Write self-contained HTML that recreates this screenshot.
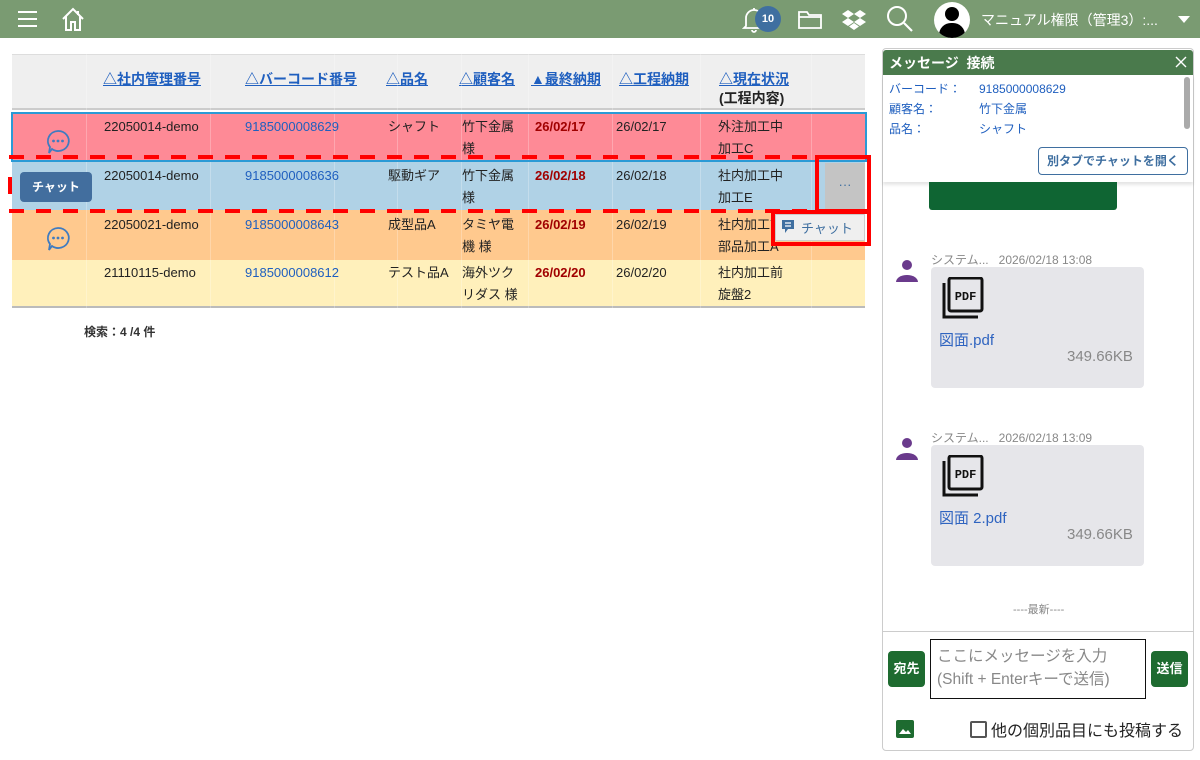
<!DOCTYPE html>
<html><head><meta charset="utf-8">
<style>
*{box-sizing:border-box;margin:0;padding:0}
body{width:1200px;height:760px;overflow:hidden;background:#fff;font-family:"Liberation Sans","Noto Sans CJK JP",sans-serif;font-size:13px;color:#222;position:relative}
.a{position:absolute}
.hdr{left:0;top:0;width:1200px;height:38px;background:#7a9b72}
.th{font-weight:bold;color:#1f5fbf;text-decoration:underline;font-size:14px}
.row{position:absolute;left:12px;width:853px}
.cell{position:absolute;line-height:22px;font-size:13px}
.vl{position:absolute;top:54px;width:1px;height:254px;background:rgba(255,255,255,.25)}
.bc{color:#1f5fbf}
.dd{color:#a00000;font-weight:bold}
.dash{position:absolute;height:4px;background:repeating-linear-gradient(90deg,#f00 0 15px,transparent 15px 27px)}
</style></head><body>
<div class="a hdr"></div>
<div class="a" style="left:18px;top:11px;width:19px;height:2px;background:#fff"></div>
<div class="a" style="left:18px;top:18px;width:19px;height:2px;background:#fff"></div>
<div class="a" style="left:18px;top:25px;width:19px;height:2px;background:#fff"></div>
<svg class="a" style="left:60px;top:6px" width="26" height="26" viewBox="0 0 26 26"><path d="M3 13 L13 3 L23 13 M6 10 V24 H11 V16 H15 V24 H20 V10 M18 5 V9" fill="none" stroke="#fff" stroke-width="2"/></svg>
<svg class="a" style="left:742px;top:6px" width="24" height="28" viewBox="0 0 24 28"><path d="M4 20 V12 a8 8 0 0 1 16 0 V20 L22 22 H2 Z M10 24 a2 2 0 0 0 4 0 M12 2 V4" fill="none" stroke="#fff" stroke-width="1.8"/></svg>
<div class="a" style="left:755px;top:6px;width:26px;height:26px;border-radius:13px;background:#3f6fa0;color:#fff;font-size:11px;font-weight:bold;text-align:center;line-height:26px">10</div>
<svg class="a" style="left:797px;top:8px" width="26" height="22" viewBox="0 0 26 22"><path d="M2 4 H10 L12 7 H24 V20 H2 Z M2 9 H24" fill="none" stroke="#fff" stroke-width="1.8"/></svg>
<svg class="a" style="left:842px;top:7px" width="24" height="24" viewBox="0 0 24 24"><g fill="#fff"><path d="M6 3 L12 7 L6 11 L0 7Z M18 3 L24 7 L18 11 L12 7Z M6 11 L12 15 L6 19 L0 15Z M18 11 L24 15 L18 19 L12 15Z M12 16 L17 19.5 L12 23 L7 19.5Z"/></g></svg>
<svg class="a" style="left:886px;top:5px" width="28" height="28" viewBox="0 0 28 28"><circle cx="11" cy="11" r="9" fill="none" stroke="#fff" stroke-width="2"/><path d="M18 18 L26 26" stroke="#fff" stroke-width="2.2"/></svg>
<div class="a" style="left:934px;top:2px;width:36px;height:36px;border-radius:18px;background:#fff;overflow:hidden"><div class="a" style="left:11px;top:5px;width:14px;height:14px;border-radius:7px;background:#000"></div><div class="a" style="left:5px;top:21px;width:26px;height:20px;border-radius:12px 12px 0 0;background:#000"></div></div>
<div class="a" style="left:981px;top:10px;color:#fff;font-size:14px">マニュアル権限（管理3）:...</div>
<div class="a" style="left:1178px;top:16px;border-left:6px solid transparent;border-right:6px solid transparent;border-top:7px solid #fff"></div>

<div class="a" style="left:12px;top:54px;width:853px;height:56px;background:#efefef;border-top:1px solid #ddd;border-bottom:2px solid #ccc"></div>
<div class="a th" style="left:103px;top:69px">△社内管理番号</div>
<div class="a th" style="left:245px;top:69px">△バーコード番号</div>
<div class="a th" style="left:386px;top:69px">△品名</div>
<div class="a th" style="left:459px;top:69px">△顧客名</div>
<div class="a th" style="left:531px;top:69px">▲最終納期</div>
<div class="a th" style="left:619px;top:69px">△工程納期</div>
<div class="a th" style="left:719px;top:69px">△現在状況</div>
<div class="a" style="left:719px;top:88px;font-weight:bold;font-size:14px">(工程内容)</div>

<div class="row" style="top:112px;height:48px;background:#fe8a96"></div>
<div class="row" style="top:160px;height:50px;background:#b0d2e6"></div>
<div class="row" style="top:210px;height:50px;background:#ffc98e"></div>
<div class="row" style="top:260px;height:48px;background:#fff0bb;border-bottom:2px solid #bbb"></div>
<div class="vl" style="left:86px"></div><div class="vl" style="left:210px"></div><div class="vl" style="left:334px"></div><div class="vl" style="left:397px"></div><div class="vl" style="left:461px"></div><div class="vl" style="left:528px"></div><div class="vl" style="left:612px"></div><div class="vl" style="left:700px"></div><div class="vl" style="left:811px"></div>
<div class="a" style="left:11px;top:112px;width:856px;height:50px;border:2px solid #2a9ad6"></div>

<div class="cell" style="left:104px;top:116px">22050014-demo</div><div class="cell bc" style="left:245px;top:116px">9185000008629</div><div class="cell" style="left:388px;top:116px">シャフト</div><div class="cell" style="left:462px;top:116px">竹下金属<br>様</div><div class="cell dd" style="left:535px;top:116px">26/02/17</div><div class="cell" style="left:616px;top:116px">26/02/17</div><div class="cell" style="left:718px;top:116px">外注加工中<br>加工C</div>
<div class="cell" style="left:104px;top:165px">22050014-demo</div><div class="cell bc" style="left:245px;top:165px">9185000008636</div><div class="cell" style="left:388px;top:165px">駆動ギア</div><div class="cell" style="left:462px;top:165px">竹下金属<br>様</div><div class="cell dd" style="left:535px;top:165px">26/02/18</div><div class="cell" style="left:616px;top:165px">26/02/18</div><div class="cell" style="left:718px;top:165px">社内加工中<br>加工E</div>
<div class="cell" style="left:104px;top:214px">22050021-demo</div><div class="cell bc" style="left:245px;top:214px">9185000008643</div><div class="cell" style="left:388px;top:214px">成型品A</div><div class="cell" style="left:462px;top:214px">タミヤ電<br>機 様</div><div class="cell dd" style="left:535px;top:214px">26/02/19</div><div class="cell" style="left:616px;top:214px">26/02/19</div><div class="cell" style="left:718px;top:214px">社内加工前<br>部品加工A</div>
<div class="cell" style="left:104px;top:262px">21110115-demo</div><div class="cell bc" style="left:245px;top:262px">9185000008612</div><div class="cell" style="left:388px;top:262px">テスト品A</div><div class="cell" style="left:462px;top:262px">海外ツク<br>リダス 様</div><div class="cell dd" style="left:535px;top:262px">26/02/20</div><div class="cell" style="left:616px;top:262px">26/02/20</div><div class="cell" style="left:718px;top:262px">社内加工前<br>旋盤2</div>

<svg class="a" style="left:45px;top:129px" width="26" height="26" viewBox="0 0 26 26"><path d="M13 2 a10.5 10 0 1 1 -6 18 L4 24 L5 18 A10.5 10 0 0 1 13 2Z" fill="none" stroke="#3f7bc0" stroke-width="1.8"/><circle cx="8.5" cy="12" r="1.4" fill="#3f7bc0"/><circle cx="13" cy="12" r="1.4" fill="#3f7bc0"/><circle cx="17.5" cy="12" r="1.4" fill="#3f7bc0"/></svg>
<svg class="a" style="left:45px;top:226px" width="26" height="26" viewBox="0 0 26 26"><path d="M13 2 a10.5 10 0 1 1 -6 18 L4 24 L5 18 A10.5 10 0 0 1 13 2Z" fill="none" stroke="#3f7bc0" stroke-width="1.8"/><circle cx="8.5" cy="12" r="1.4" fill="#3f7bc0"/><circle cx="13" cy="12" r="1.4" fill="#3f7bc0"/><circle cx="17.5" cy="12" r="1.4" fill="#3f7bc0"/></svg>
<div class="a" style="left:20px;top:172px;width:72px;height:30px;background:#426e9e;border-radius:4px;color:#fff;font-weight:bold;font-size:12px;text-align:center;line-height:30px">チャット</div>

<div class="dash" style="left:9px;top:155px;width:807px"></div>
<div class="dash" style="left:9px;top:209px;width:807px"></div>
<div class="a" style="left:8px;top:177px;width:4px;height:17px;background:#f00"></div>
<div class="a" style="left:825px;top:163px;width:40px;height:46px;background:#c4c4c4;color:#3f6fa0;text-align:center;line-height:44px;font-size:13px">···</div>
<div class="a" style="left:815px;top:155px;width:56px;height:58px;border:4px solid #f00"></div>
<div class="a" style="left:775px;top:214px;width:90px;height:27px;background:#efefef;border:1px solid #ccc"></div>
<svg class="a" style="left:781px;top:219px" width="14" height="15" viewBox="0 0 14 15"><path d="M1 1 H13 V10 H7 L4 14 V10 H1Z" fill="#3f6fa0"/><path d="M4 4 H10 M4 7 H10" stroke="#fff" stroke-width="1.2"/></svg>
<div class="a" style="left:801px;top:218px;color:#3f6fa0;font-size:13px">チャット</div>
<div class="a" style="left:771px;top:210px;width:100px;height:36px;border:4px solid #f00"></div>

<div class="a" style="left:84px;top:323px;font-weight:bold;font-size:12px;color:#333">検索：4 /4 件</div>

<div class="a" style="left:882px;top:48px;width:312px;height:703px;border:1px solid #ccc;border-radius:4px;background:#fff"></div>
<div class="a" style="left:883px;top:50px;width:310px;height:25px;background:#4a7a4c;border-radius:3px 3px 0 0"></div>
<div class="a" style="left:889px;top:53px;color:#fff;font-weight:bold;font-size:14px">メッセージ&nbsp;&nbsp;接続</div>
<svg class="a" style="left:1175px;top:56px" width="12" height="12" viewBox="0 0 12 12"><path d="M1 1 L11 11 M11 1 L1 11" stroke="#fff" stroke-width="1.4"/></svg>
<div class="a" style="left:883px;top:75px;width:310px;height:107px;background:#fff;box-shadow:0 3px 3px rgba(0,0,0,.1)"></div>
<div class="a" style="left:1184px;top:77px;width:6px;height:52px;background:#aaa;border-radius:3px"></div>
<div class="a" style="left:889px;top:79px;color:#1f5fbf;font-size:12px;line-height:20px">バーコード：<br>顧客名：<br>品名：</div>
<div class="a" style="left:979px;top:79px;color:#1f5fbf;font-size:12px;line-height:20px">9185000008629<br>竹下金属<br>シャフト</div>
<div class="a" style="left:1038px;top:147px;width:150px;height:28px;border:1px solid #3f6fa0;border-radius:4px;color:#3f6fa0;font-weight:bold;font-size:12px;text-align:center;line-height:26px">別タブでチャットを開く</div>
<div class="a" style="left:929px;top:182px;width:188px;height:28px;background:#0f6533;border-radius:0 0 3px 3px"></div>

<svg class="a" style="left:894px;top:257px" width="26" height="26" viewBox="0 0 26 26"><circle cx="13" cy="8" r="5" fill="#6a3a8c"/><path d="M2 25 a11 7 0 0 1 22 0Z" fill="#6a3a8c"/></svg>
<div class="a" style="left:931px;top:251px;color:#888;font-size:12px">システム...&nbsp;&nbsp;&nbsp;2026/02/18 13:08</div>
<div class="a" style="left:931px;top:267px;width:213px;height:121px;background:#e6e6ea;border-radius:4px"></div>
<svg class="a" style="left:942px;top:277px" width="42" height="42" viewBox="0 0 42 42"><rect x="7" y="1" width="33" height="33" rx="2" fill="none" stroke="#111" stroke-width="3"/><path d="M2 6 V40 H36" fill="none" stroke="#111" stroke-width="3"/><text x="23.5" y="23" font-family="Liberation Mono,monospace" font-weight="bold" font-size="12" text-anchor="middle" fill="#111">PDF</text></svg>
<div class="a" style="left:939px;top:329px;color:#2f64c0;font-size:15px">図面.pdf</div>
<div class="a" style="left:1067px;top:348px;color:#888;font-size:15px">349.66KB</div>

<svg class="a" style="left:894px;top:435px" width="26" height="26" viewBox="0 0 26 26"><circle cx="13" cy="8" r="5" fill="#6a3a8c"/><path d="M2 25 a11 7 0 0 1 22 0Z" fill="#6a3a8c"/></svg>
<div class="a" style="left:931px;top:429px;color:#888;font-size:12px">システム...&nbsp;&nbsp;&nbsp;2026/02/18 13:09</div>
<div class="a" style="left:931px;top:445px;width:213px;height:121px;background:#e6e6ea;border-radius:4px"></div>
<svg class="a" style="left:942px;top:455px" width="42" height="42" viewBox="0 0 42 42"><rect x="7" y="1" width="33" height="33" rx="2" fill="none" stroke="#111" stroke-width="3"/><path d="M2 6 V40 H36" fill="none" stroke="#111" stroke-width="3"/><text x="23.5" y="23" font-family="Liberation Mono,monospace" font-weight="bold" font-size="12" text-anchor="middle" fill="#111">PDF</text></svg>
<div class="a" style="left:939px;top:507px;color:#2f64c0;font-size:15px">図面 2.pdf</div>
<div class="a" style="left:1067px;top:526px;color:#888;font-size:15px">349.66KB</div>

<div class="a" style="left:1013px;top:601px;color:#888;font-size:11px">----最新----</div>
<div class="a" style="left:883px;top:631px;width:310px;height:1px;background:#ccc"></div>
<div class="a" style="left:888px;top:651px;width:37px;height:36px;background:#1e6b30;border-radius:4px;color:#fff;font-weight:bold;font-size:13px;text-align:center;line-height:36px">宛先</div>
<div class="a" style="left:930px;top:639px;width:216px;height:60px;border:1px solid #111;padding:5px 6px;color:#888;font-size:15.5px;line-height:23px">ここにメッセージを入力<br>(Shift + Enterキーで送信)</div>
<div class="a" style="left:1151px;top:651px;width:37px;height:36px;background:#1e6b30;border-radius:4px;color:#fff;font-weight:bold;font-size:13px;text-align:center;line-height:36px">送信</div>
<svg class="a" style="left:896px;top:720px" width="18" height="18" viewBox="0 0 18 18"><rect width="18" height="18" rx="2" fill="#1e6b30"/><path d="M3 14 L7 9 L10 12 L12 10 L15 14Z" fill="#fff"/></svg>
<div class="a" style="left:970px;top:721px;width:17px;height:17px;border:2px solid #555;border-radius:2px"></div>
<div class="a" style="left:991px;top:717px;font-size:16px;color:#222">他の個別品目にも投稿する</div>
</body></html>
